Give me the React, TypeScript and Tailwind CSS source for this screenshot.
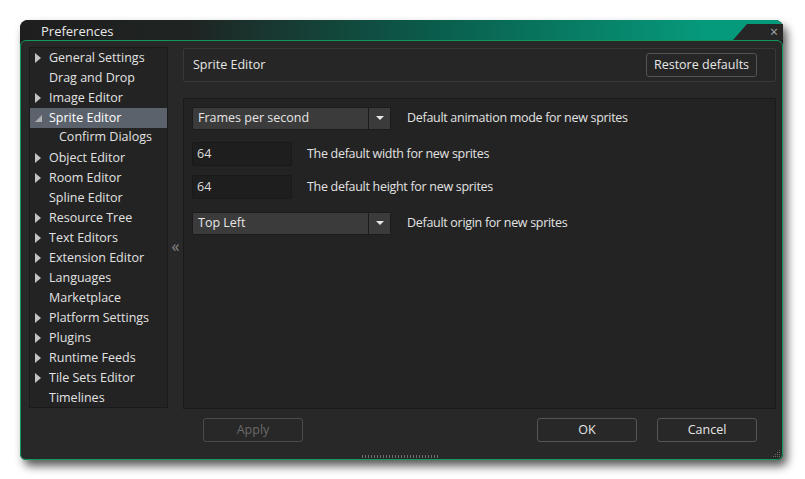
import React from 'react';

// --- TYPES ---
interface TreeItem {
  label: string;
  arrow?: 'closed' | 'open';
  indent?: boolean;
  selected?: boolean;
}

const treeItems: TreeItem[] = [
  { label: 'General Settings', arrow: 'closed' },
  { label: 'Drag and Drop' },
  { label: 'Image Editor', arrow: 'closed' },
  { label: 'Sprite Editor', arrow: 'open', selected: true },
  { label: 'Confirm Dialogs', indent: true },
  { label: 'Object Editor', arrow: 'closed' },
  { label: 'Room Editor', arrow: 'closed' },
  { label: 'Spline Editor' },
  { label: 'Resource Tree', arrow: 'closed' },
  { label: 'Text Editors', arrow: 'closed' },
  { label: 'Extension Editor', arrow: 'closed' },
  { label: 'Languages', arrow: 'closed' },
  { label: 'Marketplace' },
  { label: 'Platform Settings', arrow: 'closed' },
  { label: 'Plugins', arrow: 'closed' },
  { label: 'Runtime Feeds', arrow: 'closed' },
  { label: 'Tile Sets Editor', arrow: 'closed' },
  { label: 'Timelines' },
];

function Arrow({ kind }: { kind?: 'closed' | 'open' }) {
  if (kind === 'closed') {
    return (
      <svg width="7" height="10" viewBox="0 0 7 10" className="shrink-0">
        <polygon points="0,0 6,5 0,10" fill="#c4c4c4" />
      </svg>
    );
  }
  if (kind === 'open') {
    return (
      <svg width="7" height="10" viewBox="0 0 7 10" className="shrink-0">
        <polygon points="7,2 7,9 0,9" fill="#b0b0b0" />
      </svg>
    );
  }
  return <span className="w-[7px] shrink-0" />;
}

// --- DROPDOWN ---
function Dropdown({ value }: { value: string }) {
  return (
    <div className="flex h-[23px] w-[199px] rounded-[2px] border border-[#1c1c1c] bg-[#3b3b3b]">
      <div className="flex flex-1 items-center pl-[5px] text-[#e6e6e6]">{value}</div>
      <div className="flex w-[22px] items-center justify-center border-l border-[#1c1c1c] bg-[#3b3b3b]">
        <svg width="8" height="5" viewBox="0 0 8 5">
          <polygon points="0,0 8,0 4,4" fill="#e8e8e8" />
        </svg>
      </div>
    </div>
  );
}

function NumberField({ value }: { value: string }) {
  return (
    <div className="flex h-[24px] w-[100px] items-center rounded-[2px] border border-[#191919] bg-[#1e1e1e] pl-[4px] text-[#dcdcdc]">
      {value}
    </div>
  );
}

function Button({ children, disabled }: { children: React.ReactNode; disabled?: boolean }) {
  return (
    <button
      className={
        disabled
          ? 'flex h-[24px] w-[100px] items-center justify-center rounded-[3px] border border-[#4a4a4a] bg-[#282828] text-[#6a6a6a]'
          : 'flex h-[24px] w-[100px] items-center justify-center rounded-[3px] border border-[#555555] bg-[#282828] text-[#e6e6e6]'
      }
    >
      {children}
    </button>
  );
}

export default function App() {
  return (
    <div
      className="h-[479px] w-[805px] bg-white pl-[20px] pt-[20px] text-[12.5px]"
      style={{ fontFamily: '"Open Sans", "Noto Sans", sans-serif' }}
    >
      <div className="flex h-[440px] w-[763px] flex-col rounded-t-[8px] rounded-b-[6px] bg-[#1d1d1d] shadow-[4px_6px_10px_rgba(0,0,0,0.65)]">
        {/* Title bar */}
        <div className="relative flex h-[20px] items-center rounded-t-[8px] bg-[linear-gradient(90deg,#1e1e1e_0%,#1f2423_22%,#0a5e4c_55%,#069a7c_90%)] pl-[21px]">
          <span className="pt-[4px] text-[13px] text-[#e8e8e8]">Preferences</span>
          <svg width="50" height="16" viewBox="0 0 50 16" className="absolute bottom-0 right-0">
            <polygon points="0,16 14,0 50,0 50,16" fill="#262626" />
          </svg>
          <span className="absolute right-[5px] top-[5px] text-[14px] leading-[14px] text-[#a8a8a8]">×</span>
        </div>

        {/* Body */}
        <div className="flex flex-1 flex-col rounded-[6px] border border-[#12995c] bg-[#282828]">
          <div className="flex pl-[8px] pt-[6px]">
            {/* Tree */}
            <div className="h-[361px] w-[139px] border border-[#1a1a1a] bg-[#232323]">
              {treeItems.map((item) => (
                <div
                  key={item.label}
                  className={
                    item.selected
                      ? 'flex h-[20px] items-center gap-[7px] bg-[#5b626c] pl-[5px] text-white'
                      : item.indent
                        ? 'flex h-[20px] items-start gap-[7px] pl-[15px] text-[#e2e2e2]'
                        : 'flex h-[20px] items-center gap-[7px] pl-[5px] text-[#e2e2e2]'
                  }
                >
                  <Arrow kind={item.arrow} />
                  <span>{item.label}</span>
                </div>
              ))}
            </div>

            {/* Collapse handle */}
            <div className="flex w-[15px] items-center justify-center pt-[2px] text-[16px] text-[#8a8a8a]">«</div>

            {/* Right column */}
            <div className="mt-[1px] flex w-[593px] flex-col">
              <div className="flex h-[34px] items-center justify-between rounded-[2px] border border-[#383838] bg-[#262626] pl-[9px] pr-[18px]">
                <span className="text-[#e6e6e6]">Sprite Editor</span>
                <button className="flex h-[24px] w-[111px] items-center justify-center rounded-[3px] border border-[#545454] bg-[#262626] text-[#e6e6e6]">
                  Restore defaults
                </button>
              </div>

              <div className="mt-[16px] flex h-[311px] flex-col gap-[10px] border border-[#1a1a1a] bg-[#232323] pl-[8px] pt-[8px]">
                <div className="flex items-center gap-[16px]">
                  <Dropdown value="Frames per second" />
                  <span className="tracking-[-0.3px] text-[#e2e2e2]">Default animation mode for new sprites</span>
                </div>
                <div className="mt-[2px] flex items-center gap-[15px]">
                  <NumberField value="64" />
                  <span className="tracking-[-0.3px] text-[#e2e2e2]">The default width for new sprites</span>
                </div>
                <div className="-mt-[1px] flex items-center gap-[15px]">
                  <NumberField value="64" />
                  <span className="tracking-[-0.3px] text-[#e2e2e2]">The default height for new sprites</span>
                </div>
                <div className="mt-[3px] flex items-center gap-[16px]">
                  <Dropdown value="Top Left" />
                  <span className="tracking-[-0.3px] text-[#e2e2e2]">Default origin for new sprites</span>
                </div>
              </div>

              <div className="mt-[9px] flex items-center justify-between pl-[20px] pr-[19px]">
                <Button disabled>Apply</Button>
                <div className="flex gap-[20px]">
                  <Button>OK</Button>
                  <Button>Cancel</Button>
                </div>
              </div>
            </div>
          </div>

          {/* Bottom grip */}
          <div className="mt-auto flex items-end justify-between pb-[1px]">
            <span className="w-[8px]" />
            <div className="h-[3px] w-[78px] bg-[repeating-linear-gradient(90deg,#6f6f6f_0px,#6f6f6f_1px,transparent_1px,transparent_3px)]" />
            <svg width="8" height="8" viewBox="0 0 8 8" className="mr-[1px]">
              <rect x="6" y="0" width="1" height="1" fill="#6a6a6a" />
              <rect x="4" y="2" width="1" height="1" fill="#6a6a6a" />
              <rect x="6" y="2" width="1" height="1" fill="#6a6a6a" />
              <rect x="2" y="4" width="1" height="1" fill="#6a6a6a" />
              <rect x="4" y="4" width="1" height="1" fill="#6a6a6a" />
              <rect x="6" y="4" width="1" height="1" fill="#6a6a6a" />
              <rect x="0" y="6" width="1" height="1" fill="#6a6a6a" />
              <rect x="2" y="6" width="1" height="1" fill="#6a6a6a" />
              <rect x="4" y="6" width="1" height="1" fill="#6a6a6a" />
              <rect x="6" y="6" width="1" height="1" fill="#6a6a6a" />
            </svg>
          </div>
        </div>
      </div>
    </div>
  );
}
